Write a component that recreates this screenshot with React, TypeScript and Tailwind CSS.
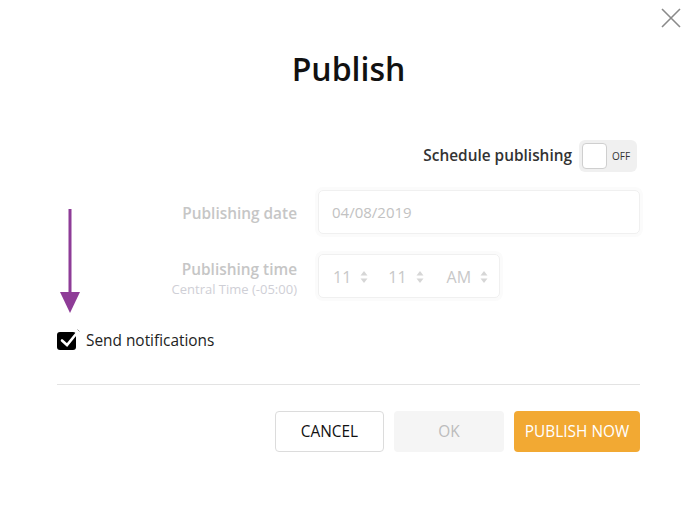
import { useState } from "react";

export default function App() {
  const [notify, setNotify] = useState(true);

  return (
    <div
      className="relative w-[688px] h-[510px] bg-white text-[#333] overflow-hidden"
      style={{ fontFamily: '"Open Sans", "Liberation Sans", sans-serif' }}
    >
      <button
        type="button"
        aria-label="Close"
        className="absolute right-[6px] top-[7px] w-[22px] h-[22px] text-[#8a8a8a]"
      >
        <svg viewBox="0 0 22 22" className="w-full h-full" fill="none" stroke="currentColor" strokeWidth="1.6">
          <path d="M2 2 L20 20 M20 2 L2 20" />
        </svg>
      </button>

      {/* annotation arrow */}
      <svg className="absolute left-[59px] top-[209px]" width="22" height="105" viewBox="0 0 22 105">
        <rect x="9.5" y="0" width="3" height="86" fill="#8e3c97" />
        <path d="M1 83 L21 83 L11 104 Z" fill="#8e3c97" />
      </svg>

      <div className="pl-[57px] pr-[48px] pt-[45px]">
        <h1 className="text-center text-[32px] leading-[48px] font-semibold text-[#111]">Publish</h1>

        <div className="mt-[47px] flex items-center justify-end pr-[3px] gap-[7px]">
          <span className="text-[15.4px] font-semibold text-[#333]">Schedule publishing</span>
          <div className="w-[58px] h-[32px] rounded-[6px] bg-[#f0f0f0] flex items-center pl-[3px] gap-[5px]">
            <div className="w-[25px] h-[26px] rounded-[4px] bg-white border border-[#cfcfcf]" />
            <span className="text-[10px] text-[#333]">OFF</span>
          </div>
        </div>

        <div className="mt-[18px] flex items-center">
          <div className="w-[240px] text-right pt-[3px] text-[15.4px] font-semibold text-[#c6c6c6]">Publishing date</div>
          <div className="ml-[21px] flex-1 h-[44px] rounded-[5px] border border-[#f0f0f0] shadow-[0_0_0_3px_#fbfbfb] flex items-center px-[13px] text-[15px] text-[#c2c2c2]">
            04/08/2019
          </div>
        </div>

        <div className="mt-[20px] flex items-center">
          <div className="w-[240px] h-[44px] text-right pt-[6px]">
            <div className="text-[15.4px] leading-[20px] font-semibold text-[#c6c6c6]">Publishing time</div>
            <div className="text-[13px] leading-[18px] text-[#cfcfd6]">Central Time (-05:00)</div>
          </div>
          <div className="ml-[21px] w-[182px] h-[44px] rounded-[5px] border border-[#f0f0f0] shadow-[0_0_0_3px_#fbfbfb] flex items-center pl-[14px] pt-[1px] text-[16px] text-[#c8c8c8]">
            <TimePart value="11" />
            <div className="w-[20px]" />
            <TimePart value="11" />
            <div className="w-[23px]" />
            <TimePart value="AM" />
          </div>
        </div>

        <label className="mt-[31px] flex items-center gap-[10px] cursor-pointer">
          <span className="relative w-[19px] h-[18px]">
            <input
              type="checkbox"
              checked={notify}
              onChange={(e) => setNotify(e.target.checked)}
              className="sr-only"
            />
            <span className="absolute inset-0 rounded-[3px] bg-black" />
            {notify && (
              <svg className="absolute left-[2px] top-[-4px]" width="22" height="20" viewBox="0 0 22 20" fill="none">
                <path d="M3 12.5 L8 17 L19.5 3" stroke="white" strokeWidth="2.6" strokeLinecap="round" />
                <path d="M18.5 1.5 L20.5 3.5" stroke="#777" strokeWidth="0.8" />
              </svg>
            )}
          </span>
          <span className="text-[15.4px] text-[#222]">Send notifications</span>
        </label>

        <div className="mt-[32px] h-px bg-[#e3e3e3]" />

        <div className="mt-[26px] flex justify-end gap-[10px]">
          <button
            type="button"
            className="w-[109px] h-[41px] rounded-[4px] border border-[#dcdcdc] bg-white text-[15.4px] text-[#111]"
          >
            CANCEL
          </button>
          <button
            type="button"
            disabled
            className="w-[110px] h-[41px] rounded-[4px] bg-[#f5f5f5] text-[15.4px] text-[#bcbcbc]"
          >
            OK
          </button>
          <button
            type="button"
            className="w-[126px] h-[41px] rounded-[4px] bg-[#f2a933] text-[15.4px] text-white"
          >
            PUBLISH NOW
          </button>
        </div>
      </div>
    </div>
  );
}

function TimePart({ value }: { value: string }) {
  return (
    <div className="flex items-center gap-[9px]">
      <span>{value}</span>
      <svg width="8" height="14" viewBox="0 0 8 14" fill="#d6d6d6">
        <path d="M4 1 L7.5 5.5 L0.5 5.5 Z" />
        <path d="M4 13 L7.5 8.5 L0.5 8.5 Z" />
      </svg>
    </div>
  );
}
